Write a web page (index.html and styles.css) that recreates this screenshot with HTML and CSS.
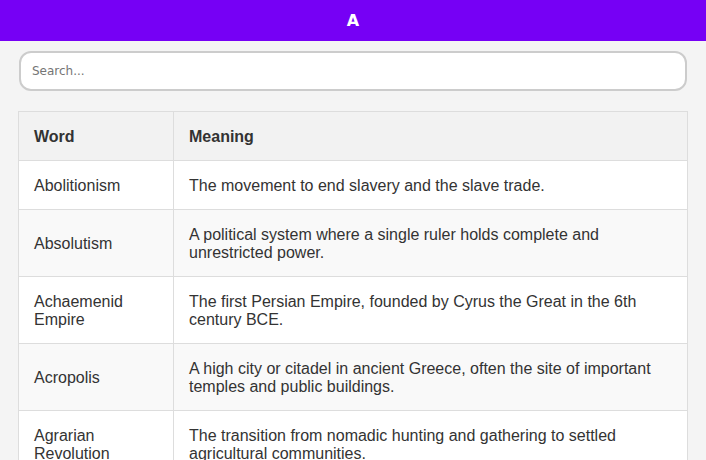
FILE: index.html
```html
<!DOCTYPE html>
<html lang="en">
<head>
<meta charset="utf-8">
<title>A</title>
<link rel="stylesheet" href="styles.css">
</head>
<body>
<header class="top-bar">A</header>
<main class="content">
  <input class="search" type="text" placeholder="Search...">
  <table class="glossary">
    <colgroup><col class="col-word"><col class="col-meaning"></colgroup>
    <thead>
      <tr><th>Word</th><th>Meaning</th></tr>
    </thead>
    <tbody>
      <tr><td>Abolitionism</td><td>The movement to end slavery and the slave trade.</td></tr>
      <tr><td>Absolutism</td><td>A political system where a single ruler holds complete and unrestricted power.</td></tr>
      <tr><td>Achaemenid Empire</td><td>The first Persian Empire, founded by Cyrus the Great in the 6th century BCE.</td></tr>
      <tr><td>Acropolis</td><td>A high city or citadel in ancient Greece, often the site of important temples and public buildings.</td></tr>
      <tr><td>Agrarian Revolution</td><td>The transition from nomadic hunting and gathering to settled agricultural communities.</td></tr>
      <tr><td>Alexander the Great</td><td>King of Macedon who created one of the largest empires of the ancient world.</td></tr>
      <tr><td>Allied Powers</td><td>The coalition of nations that opposed the Axis Powers in World War II.</td></tr>
    </tbody>
  </table>
</main>
</body>
</html>
```
FILE: styles.css
```css
html, body {
  margin: 0;
  padding: 0;
}
body {
  background: #f4f4f4;
  font-family: "Liberation Sans", Arial, sans-serif;
  color: #333;
}
.top-bar {
  background: #7600f5;
  color: #fff;
  height: 41px;
  display: flex;
  align-items: center;
  justify-content: center;
  font-family: "DejaVu Sans", sans-serif;
  font-weight: bold;
  font-size: 16px;
}
.content {
  padding: 10px 18px 20px;
}
.search {
  display: block;
  box-sizing: border-box;
  width: 668px;
  height: 40px;
  margin: 0 1px;
  padding: 0 11px;
  border: 2px solid #cccccc;
  border-radius: 12px;
  background: #fff;
  font-family: "DejaVu Sans", sans-serif;
  font-size: 12px;
  color: #333;
  outline: none;
}
.search::placeholder {
  color: #757575;
}
.glossary {
  margin-top: 20px;
  width: 670px;
  table-layout: fixed;
  border-collapse: collapse;
  background: #fff;
  border-radius: 8px;
  font-size: 16px;
}
.col-word { width: 155px; }
.glossary th,
.glossary td {
  border: 1px solid #dddddd;
  padding: 16px 15px 14px;
  text-align: left;
  vertical-align: middle;
  line-height: 18px;
}
.glossary th {
  background: #f2f2f2;
  color: #333;
  font-weight: bold;
}
.glossary td {
  color: #333;
}
.glossary tbody tr:nth-child(even) td {
  background: #f9f9f9;
}
```
